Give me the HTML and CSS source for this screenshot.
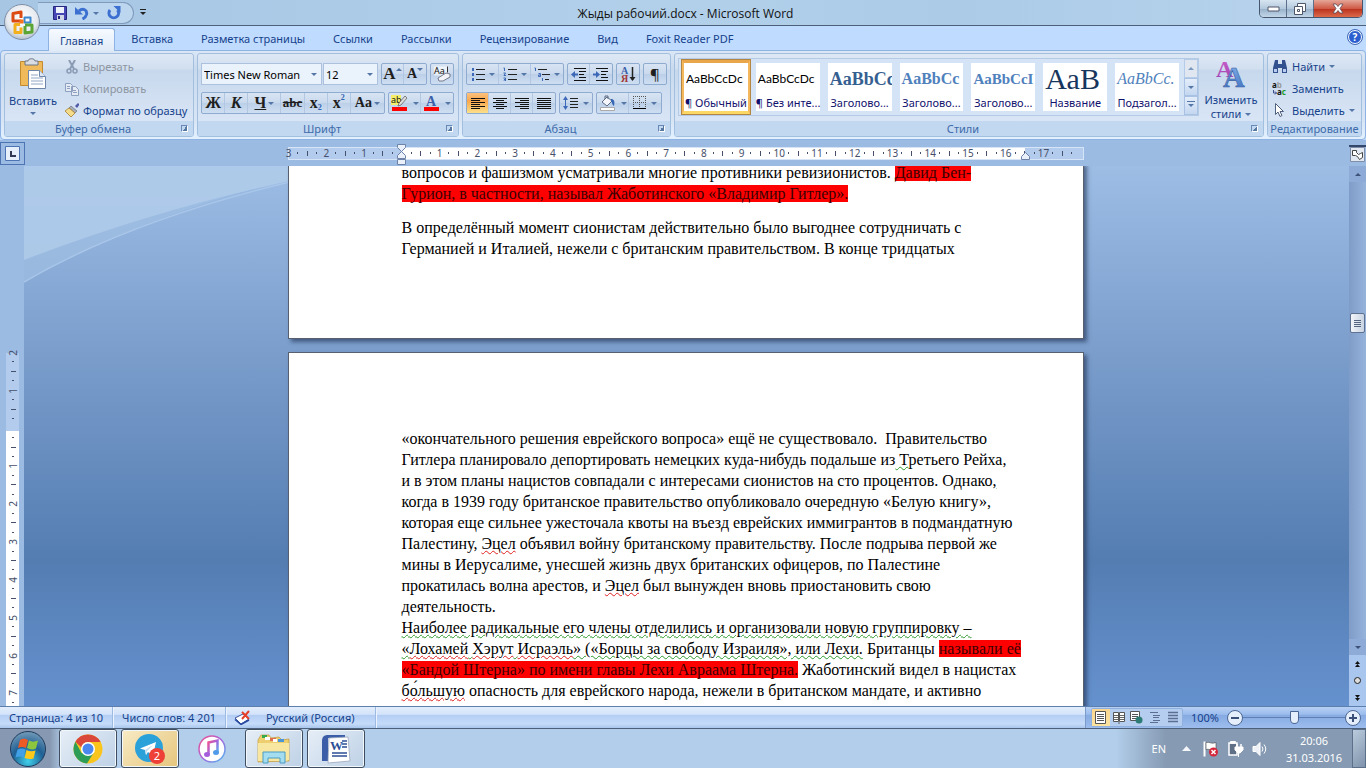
FILE: index.html
```html
<!DOCTYPE html>
<html lang="ru">
<head>
  <meta charset="UTF-8">
  <meta name="viewport" content="width=device-width, initial-scale=1.0">
  <title>Жыды рабочий.docx - Microsoft Word</title>
  <link rel="stylesheet" href="styles.css">
</head>
<body>
  <!-- Title bar -->
  <header class="title-bar">
    <button class="office-button" aria-label="Office">
      <svg width="38" height="38" viewBox="0 0 38 38">
        <defs>
          <radialGradient id="orb" cx="50%" cy="40%" r="60%"><stop offset="0" stop-color="#fff"/><stop offset=".7" stop-color="#e6eaf0"/><stop offset="1" stop-color="#b4bfcd"/></radialGradient>
        </defs>
        <circle cx="19" cy="19" r="17.5" fill="url(#orb)" stroke="#7d8ea6"/>
        <g fill="none" stroke-width="3" stroke-linejoin="round">
          <path d="M18 18h-8v-7.500l8-1.500v6" stroke="#dc4a12"/>
          <path d="M21.500 14.500h6v5h-6z" stroke="#3a86cf" stroke-width="2"/>
          <path d="M17 21.500h-5v8h6v-5" stroke="#f2b01c"/>
          <path d="M22 22h7v7l-7 1v-7" stroke="#5ba534"/>
        </g>
        <path d="M16.500 16.500h4v4h-4z" fill="#f7741d"/>
      </svg>
    </button>
    <div class="quick-access">
      <button class="qa-button" aria-label="Сохранить">
        <svg width="14" height="14" viewBox="0 0 14 14"><path d="M.5.5h13v13h-13z" fill="#4646b4" stroke="#26267e"/><path d="M3 1h8v6H3z" fill="#eef2fb"/><path d="M4 9h7v5H4z" fill="#cfd6e6"/><path d="M5 10h2v3H5z" fill="#26267e"/></svg>
      </button>
      <button class="qa-button" aria-label="Отменить">
        <svg width="14" height="14" viewBox="0 0 14 14"><path d="M4 5C8 1.500 12.500 4 11.500 8.500 11 10.500 9.500 12 7.500 13" fill="none" stroke="#3b6fd0" stroke-width="3"/><path d="M0 1v7.500h8z" fill="#3b6fd0"/></svg>
      </button>
      <span class="arrow"></span>
      <button class="qa-button" aria-label="Повторить">
        <svg width="14" height="14" viewBox="0 0 14 14"><path d="M3 4A4.800 4.800 0 1 0 10.500 4" fill="none" stroke="#3b6fd0" stroke-width="3"/><path d="M6.500 0h7v7z" fill="#3b6fd0"/></svg>
      </button>
    </div>
    <button class="qa-more" aria-label="Настройка"><span class="arrow"></span></button>
    <h1 class="window-title">Жыды рабочий.docx - Microsoft Word</h1>
    <div class="window-buttons">
      <button class="win-button" aria-label="Свернуть"><svg width="13" height="6"><path d="M1 1h11v4H1z" fill="#fff" stroke="#50566a"/></svg></button>
      <button class="win-button" aria-label="Развернуть"><svg width="12" height="12" viewBox="0 0 12 12"><path d="M3.500.5h8v8h-8z" fill="#fff" stroke="#50566a"/><path d="M.5 3.500h8v8h-8z" fill="#fff" stroke="#50566a"/><path d="M3.500 6.500h2v2h-2z" fill="#fff" stroke="#50566a"/></svg></button>
      <button class="win-button win-close" aria-label="Закрыть"><svg width="12" height="11" viewBox="0 0 12 11"><path d="M1 1h3l2 2.500L8 1h3L8 5.500 11 10H8L6 7.500 4 10H1l3-4.500z" fill="#fff" stroke="#5b4a55" stroke-width=".8"/></svg></button>
    </div>
  </header>

  <!-- Tabs -->
  <nav class="tabs">
    <button class="tab active">Главная</button>
    <button class="tab">Вставка</button>
    <button class="tab">Разметка страницы</button>
    <button class="tab">Ссылки</button>
    <button class="tab">Рассылки</button>
    <button class="tab">Рецензирование</button>
    <button class="tab">Вид</button>
    <button class="tab">Foxit Reader PDF</button>
    <button class="help" aria-label="Справка">?</button>
  </nav>

  <!-- Ribbon -->
  <section class="ribbon">
    <div class="group group-clipboard">
      <div class="group-body">
        <button class="big-button paste">
          <svg width="28" height="32" viewBox="0 0 28 32">
            <path d="M1.500 3.500h22v24h-22z" fill="#f0b95a" stroke="#c48a2e"/>
            <path d="M6 3h3c0-3 7-3 7 0h3v4H6z" fill="#d9dde3" stroke="#6d7684"/>
            <path d="M9.500 12.500h11l6 6v12h-17z" fill="#fff" stroke="#6f86ab"/>
            <path d="M20.500 12.500v6h6" fill="#dfe7f3" stroke="#6f86ab"/>
            <path d="M12 17h7M12 20h12M12 23h12M12 26h12" stroke="#8fa5c7"/>
          </svg>
          <span>Вставить</span>
          <span class="arrow"></span>
        </button>
        <div class="button-list">
          <button class="text-button disabled"><svg width="14" height="14" viewBox="0 0 14 14"><path d="M4 0l5 9M10 0L5 9" stroke="#8a9bb5" stroke-width="2"/><circle cx="4" cy="11" r="2" fill="none" stroke="#8a9bb5" stroke-width="1.500"/><circle cx="10" cy="11" r="2" fill="none" stroke="#8a9bb5" stroke-width="1.500"/></svg>Вырезать</button>
          <button class="text-button disabled"><svg width="14" height="14" viewBox="0 0 14 14"><path d="M.5 1.500h5l2 2v6h-7zM6.500 4.500h4l3 3v6h-7z" fill="#e4ebf5" stroke="#8da0bf"/><path d="M2 4.500h3M2 6.500h3M8 8.500h3M8 10.500h4" stroke="#8da0bf"/></svg>Копировать</button>
          <button class="text-button"><svg width="14" height="14" viewBox="0 0 14 14"><path d="M10 3l3-3 1.500 1.500L12 5z" fill="#4e5aa8"/><path d="M6 3l6 5-2 2-6-5z" fill="#a8adb8" stroke="#60656f" stroke-width=".6"/><path d="M4 5l6 5-4 4-6-6z" fill="#f4dc8a" stroke="#a8812c" stroke-width=".8"/></svg>Формат по образцу</button>
        </div>
      </div>
      <div class="group-label"><span>Буфер обмена</span><i class="launcher"></i></div>
    </div>

    <div class="group group-font">
      <div class="group-body rows">
        <div class="row">
          <div class="combos">
            <label class="combo combo-font"><select aria-label="Шрифт"><option>Times New Roman</option></select><span class="arrow"></span></label>
            <label class="combo combo-size"><select aria-label="Размер"><option>12</option></select><span class="arrow"></span></label>
          </div>
          <div class="tool-set">
            <button class="tool serif big-a">A<span class="arrow up"></span></button>
            <button class="tool serif small-a">A<span class="arrow"></span></button>
          </div>
          <div class="tool-set">
            <button class="tool" aria-label="Очистить формат"><svg width="18" height="16" viewBox="0 0 18 16"><path d="M1 .5h14v9H1z" fill="#fff" opacity=".6"/><text x="1" y="8" class="icon-text">Aa</text><path d="M14.500.5v6" stroke="#333"/><path d="M5 12l8-5 4 1v3l-7 4H6z" fill="#f4f4f8" stroke="#737a8c"/></svg></button>
          </div>
        </div>
        <div class="row">
          <div class="tool-set fill">
            <button class="tool serif">Ж</button>
            <button class="tool serif italic">К</button>
            <button class="tool wide serif"><u>Ч</u><span class="arrow"></span></button>
            <button class="tool serif strike">abc</button>
            <button class="tool serif">x<sub>2</sub></button>
            <button class="tool serif">x<sup>2</sup></button>
            <button class="tool wide serif case">Aa<span class="arrow"></span></button>
          </div>
          <div class="tool-set">
            <button class="tool wide" aria-label="Цвет выделения"><svg width="18" height="16" viewBox="0 0 18 16"><path d="M0 0h10v10H0z" fill="#f5ee6a"/><text x="0" y="8" class="icon-text">ab</text><path d="M14 1l2 2-6 7-3 1 1-3z" fill="#ddd" stroke="#555" stroke-width=".7"/><path d="M1 12h15v4H1z" fill="#f00"/></svg><span class="arrow"></span></button>
            <button class="tool wide" aria-label="Цвет текста"><svg width="18" height="16" viewBox="0 0 18 16"><text x="3" y="11" class="icon-letter">A</text><path d="M1 12h15v4H1z" fill="#f00"/></svg><span class="arrow"></span></button>
          </div>
        </div>
      </div>
      <div class="group-label"><span>Шрифт</span><i class="launcher"></i></div>
    </div>

    <div class="group group-paragraph">
      <div class="group-body rows">
        <div class="row">
          <div class="tool-set fill">
            <button class="tool wide" aria-label="Маркеры"><svg width="14" height="14" viewBox="0 0 14 14"><path d="M5 2.500h9M5 7.500h9M5 12.500h9" stroke="#222"/><path d="M1 1h2v3H1zM1 6h2v3H1zM1 11h2v3H1z" fill="#3d68b8"/></svg><span class="arrow"></span></button>
            <button class="tool wide" aria-label="Нумерация"><svg width="14" height="14" viewBox="0 0 14 14"><path d="M5 2.500h9M5 7.500h9M5 12.500h9" stroke="#222"/><path d="M.5 1h1v3M.5 6h2L1 8.500h2M.5 11h2v1.500H1h1.500V14H.5" fill="none" stroke="#3d68b8"/></svg><span class="arrow"></span></button>
            <button class="tool wide" aria-label="Список"><svg width="16" height="14" viewBox="0 0 16 14"><path d="M4 2.500h9M8 7.500h8M11 12.500h4" stroke="#222"/><path d="M.5 1h1v3M4.500 6.500h2v3h-2V8h2M8.500 11v3" fill="none" stroke="#3d68b8"/></svg><span class="arrow"></span></button>
          </div>
          <div class="tool-set">
            <button class="tool" aria-label="Уменьшить отступ"><svg width="16" height="13" viewBox="0 0 16 13"><path d="M3 .5h12M8 3.500h7M8 6.500h5M8 9.500h7M3 12.500h12" stroke="#111"/><path d="M4 3v7L0 6.500z" fill="#3d68b8"/><path d="M3 6.500h4" stroke="#3d68b8" stroke-width="2"/></svg></button>
            <button class="tool" aria-label="Увеличить отступ"><svg width="16" height="13" viewBox="0 0 16 13"><path d="M3 .5h12M8 3.500h7M8 6.500h5M8 9.500h7M3 12.500h12" stroke="#111"/><path d="M3 3v7l4-3.500z" fill="#3d68b8"/><path d="M0 6.500h4" stroke="#3d68b8" stroke-width="2"/></svg></button>
          </div>
          <div class="tool-set">
            <button class="tool" aria-label="Сортировка"><svg width="16" height="17" viewBox="0 0 16 17"><text x="1" y="8" class="sort-a">А</text><text x="1" y="16" class="sort-ya">Я</text><path d="M12.500 1v13" stroke="#222" stroke-width="1.500"/><path d="M9.500 11h6l-3 4z" fill="#222"/></svg></button>
          </div>
          <div class="tool-set">
            <button class="tool pilcrow">¶</button>
          </div>
        </div>
        <div class="row">
          <div class="tool-set">
            <button class="tool pressed" aria-label="По левому краю"><svg width="14" height="11"><path d="M0 .5h14M0 2.500h9M0 4.500h14M0 6.500h9M0 8.500h14M0 10.500h9" stroke="#111"/></svg></button>
            <button class="tool" aria-label="По центру"><svg width="14" height="11"><path d="M0 .5h14M3 2.500h8M0 4.500h14M3 6.500h8M0 8.500h14M3 10.500h8" stroke="#111"/></svg></button>
            <button class="tool" aria-label="По правому краю"><svg width="14" height="11"><path d="M0 .5h14M5 2.500h9M0 4.500h14M5 6.500h9M0 8.500h14M5 10.500h9" stroke="#111"/></svg></button>
            <button class="tool" aria-label="По ширине"><svg width="14" height="11"><path d="M0 .5h14M0 2.500h14M0 4.500h14M0 6.500h14M0 8.500h14M0 10.500h14" stroke="#111"/></svg></button>
          </div>
          <div class="tool-set">
            <button class="tool wide" aria-label="Интервал"><svg width="16" height="16" viewBox="0 0 16 16"><path d="M7 3.500h8M7 6.500h8M7 9.500h8M7 12.500h8" stroke="#222"/><path d="M0 5l2.500-4L5 5zM0 11l2.500 4L5 11z" fill="#3d68b8"/><path d="M2.500 4v8" stroke="#3d68b8"/></svg><span class="arrow"></span></button>
          </div>
          <div class="tool-set">
            <button class="tool wide" aria-label="Заливка"><svg width="18" height="16" viewBox="0 0 18 16"><path d="M3 7l5-5 5 4-5 5z" fill="#f4f6fb" stroke="#5d6b85"/><path d="M6 4V1h3v3" fill="none" stroke="#5d6b85"/><path d="M12 4c3 0 4 2 3 7-2-1-2-4-3-5z" fill="#3565b5"/><path d="M1.500 12.500h14v3h-14z" fill="#fff" stroke="#aaa"/></svg><span class="arrow"></span></button>
            <button class="tool wide" aria-label="Границы"><svg width="14" height="14"><path d="M.5 0v13M6.500 0v13M12.500 0v13M0 .5h13M0 6.500h13" stroke="#555" stroke-dasharray="1 1"/><path d="M0 12.500h13" stroke="#000"/></svg><span class="arrow"></span></button>
          </div>
        </div>
      </div>
      <div class="group-label"><span>Абзац</span><i class="launcher"></i></div>
    </div>

    <div class="group group-styles">
      <div class="group-body">
        <div class="gallery">
          <button class="style-item selected"><span class="sample normal">AaBbCcDс</span><span class="name">¶ Обычный</span></button>
          <button class="style-item"><span class="sample normal">AaBbCcDс</span><span class="name">¶ Без инте...</span></button>
          <button class="style-item"><span class="sample heading-one">AaBbCс</span><span class="name">Заголово...</span></button>
          <button class="style-item"><span class="sample heading-two">AaBbCc</span><span class="name">Заголово...</span></button>
          <button class="style-item"><span class="sample heading-three">AaBbCcI</span><span class="name">Заголово...</span></button>
          <button class="style-item"><span class="sample title">АаВ</span><span class="name">Название</span></button>
          <button class="style-item"><span class="sample subtitle">AaBbCc.</span><span class="name">Подзагол...</span></button>
          <div class="gallery-scroll">
            <button class="off" aria-label="Вверх"><span class="arrow up"></span></button>
            <button aria-label="Вниз"><span class="arrow"></span></button>
            <button aria-label="Все стили"><span class="arrow barred"></span></button>
          </div>
        </div>
        <button class="big-button change-styles">
          <svg width="30" height="30" viewBox="0 0 30 30">
            <defs>
              <linearGradient id="violet" x2="0" y2="1"><stop offset="0" stop-color="#d063cf"/><stop offset="1" stop-color="#9a3fae"/></linearGradient>
              <linearGradient id="azure" x2="0" y2="1"><stop offset="0" stop-color="#8db6ec"/><stop offset="1" stop-color="#3a6fc0"/></linearGradient>
            </defs>
            <text x="0" y="18" class="art-a" fill="url(#violet)">A</text>
            <text x="7" y="28" class="art-a large" fill="url(#azure)" stroke="#3b62a4" stroke-width=".6">A</text>
          </svg>
          <span>Изменить</span>
          <span class="with-arrow">стили<span class="arrow"></span></span>
        </button>
      </div>
      <div class="group-label"><span>Стили</span><i class="launcher"></i></div>
    </div>

    <div class="group group-editing">
      <div class="group-body">
        <div class="button-list">
          <button class="text-button"><svg width="16" height="14" viewBox="0 0 16 14"><path d="M3 0h3v4h4V0h3l2 8v5h-5V8H6v5H1V8z" fill="#33518e"/><path d="M2 9h3v3H2zM11 9h3v3h-3z" fill="#b9cdf0"/></svg>Найти<span class="arrow"></span></button>
          <button class="text-button"><svg width="16" height="14" viewBox="0 0 16 14"><text x="0" y="6" class="icon-text bold">a<tspan fill="#999">b</tspan></text><path d="M1.500 8v3h3M3 9.500L4.500 11 3 12.500" fill="none" stroke="#3c4d8c"/><text x="5" y="13" class="icon-text bold">a<tspan fill="#1a9a2a">c</tspan></text></svg>Заменить</button>
          <button class="text-button"><svg width="16" height="14" viewBox="0 0 16 14"><path d="M3.500.5v11l2.500-2.500 2 4.500 2-1-2-4h3.500z" fill="#fff" stroke="#50607f"/></svg>Выделить<span class="arrow"></span></button>
        </div>
      </div>
      <div class="group-label"><span>Редактирование</span></div>
    </div>
  </section>

  <!-- Horizontal ruler -->
  <div class="ruler-row">
    <button class="tab-stop" aria-label="Табуляция"><svg width="15" height="15"><path d="M.5.500h14v14H.5z" fill="#e6effa" stroke="#4f74b4"/><path d="M6 5v5h5" fill="none" stroke="#333a55" stroke-width="2"/></svg></button>
    <div class="ruler-area">
      <div class="ruler">
        <div class="ruler-scale" id="ruler-h"></div>
        <svg class="marker marker-left" width="9" height="21" viewBox="0 0 9 21"><path d="M.5.5h8v3l-4 4-4-4zM.5 14.500v-3l4-4 4 4v3z" fill="#eaf1fb" stroke="#6d82a8"/><path d="M.5 15.500h8v5h-8z" fill="#eaf1fb" stroke="#6d82a8"/></svg>
        <svg class="marker marker-right" width="9" height="8" viewBox="0 0 9 8"><path d="M.5 7.500v-3l4-4 4 4v3z" fill="#eaf1fb" stroke="#6d82a8"/></svg>
      </div>
    </div>
    <button class="ruler-toggle" aria-label="Линейка"><svg width="15" height="15"><path d="M.5 .5h14v14H.5z" fill="#e2e8f1" stroke="#7f8ea8"/><path d="M2.500 3.500h4v2l2 2 2-1 2-1v5l-3 2-2-3-2-1-3 0z" fill="#fff" stroke="#444"/></svg></button>
  </div>

  <!-- Document area -->
  <main class="workspace">
    <div class="side-ruler"><div class="side-scale" id="ruler-v"></div></div>
    <div class="canvas">
      <svg class="swoosh" width="700" height="120" viewBox="0 0 700 120">
        <path d="M0 0H310V4Q140 38 0 116z" fill="#a3c1e5" opacity=".6"/>
        <path d="M0 116Q120 46 310 6" fill="none" stroke="#a9c6e9" stroke-width="1.500"/>
        <path d="M0 0H310V6Q150 36 0 94z" fill="#b3cdeb" opacity=".75"/>
      </svg>
      <article class="page page-first">
        <p>вопросов и фашизмом усматривали многие противники ревизионистов. <mark>Давид Бен-</mark><br>
        <mark>Гурион, в частности, называл Жаботинского «Владимир Гитлер».</mark></p>
        <p>В определённый момент сионистам действительно было выгоднее сотрудничать с<br>
        Германией и Италией, нежели с британским правительством. В конце тридцатых</p>
      </article>
      <article class="page page-second">
        <p>«окончательного решения еврейского вопроса» ещё не существовало.&nbsp; Правительство<br>
        Гитлера планировало депортировать немецких куда-нибудь подальше из<span class="grammar"> Т</span>ретьего Рейха,<br>
        и в этом планы нацистов совпадали с интересами сионистов на сто процентов. Однако<span class="grammar">,</span><br>
        когда в 1939 году британское правительство опубликовало очередную «Белую книгу»,<br>
        которая еще сильнее ужесточала квоты на въезд еврейских иммигрантов в подмандатную<br>
        Палестину, <span class="spelling">Эцел</span> объявил войну британскому правительству. После подрыва первой же<br>
        мины в Иерусалиме, унесшей жизнь двух британских офицеров, по Палестине<br>
        прокатилась волна арестов, и <span class="spelling">Эцел</span> был вынужден вновь приостановить свою<br>
        деятельность.<br>
        <span class="grammar">Наиболее радикальные его члены отделились и организовали новую группировку –</span><br>
        <span class="grammar">«</span><span class="spelling">Лохамей</span><span class="grammar"> </span><span class="spelling">Хэрут</span><span class="grammar"> </span><span class="spelling">Исраэль</span><span class="grammar">» («Борцы за свободу Израиля», или Лехи.</span> Британцы <mark>называли её</mark><br>
        <mark>«Бандой Штерна» по имени главы Лехи Авраама Штерна.</mark> Жаботинский видел в нацистах<br>
        <span class="spelling">бо́льшую</span> опасность для еврейского народа, нежели в британском мандате, и активно</p>
      </article>
    </div>
    <div class="scrollbar">
      <button class="scroll-button" aria-label="Вверх"><span class="arrow up"></span></button>
      <div class="track"><div class="thumb"><i></i><i></i><i></i><i></i></div></div>
      <button class="scroll-button" aria-label="Вниз"><span class="arrow"></span></button>
      <button class="browse" aria-label="Предыдущая"><svg width="5" height="6"><path d="M0 3l2.500-3L5 3zM0 6l2.500-3L5 6z" fill="#111"/></svg></button>
      <button class="browse" aria-label="Выбор объекта"><svg width="7" height="7"><circle cx="3.500" cy="3.500" r="3" fill="#ddd" stroke="#222"/></svg></button>
      <button class="browse" aria-label="Следующая"><svg width="5" height="6"><path d="M0 0h5L2.500 3zM0 3h5L2.500 6z" fill="#111"/></svg></button>
    </div>
  </main>

  <!-- Status bar -->
  <footer class="status-bar">
    <span class="status-item">Страница: 4 из 10</span>
    <span class="status-item">Число слов: 4 201</span>
    <span class="status-item language"><svg width="17" height="15" viewBox="0 0 17 15"><path d="M1 8l6 6 8-5-6-5z" fill="#fff" stroke="#3a56a0"/><path d="M1 9.500l6 5 8-4.500" fill="none" stroke="#2848a0" stroke-width="1.500"/><path d="M8 2l7 7M15 1L8 9" stroke="#e5402a" stroke-width="2"/></svg>Русский (Россия)</span>
    <div class="status-right">
      <div class="views">
        <button class="view current" aria-label="Разметка"><svg width="12" height="13"><path d="M.5.5h10v12H.5z" fill="#fff" stroke="#555"/><path d="M2 3.500h7M2 5.500h7M2 7.500h7M2 9.500h7" stroke="#555"/></svg></button>
        <button class="view" aria-label="Чтение"><svg width="12" height="13"><path d="M.5 1.500h5v9h-5zM6.500 1.500h5v9h-5z" fill="#fff" stroke="#555"/><path d="M1 4.500h4M1 6.500h4M1 8.500h4M7 4.500h4M7 6.500h4M7 8.500h4M5 12h2" stroke="#666"/></svg></button>
        <button class="view" aria-label="Веб"><svg width="13" height="13"><path d="M.5.5h9v9h-9z" fill="#fff" stroke="#555"/><path d="M2 3.500h6M2 5.500h6M2 7.500h4" stroke="#555"/><circle cx="9" cy="9" r="3.500" fill="#2c7b75"/></svg></button>
        <button class="view" aria-label="Структура"><svg width="12" height="13"><path d="M1 1.500h8M4 4.500h7M4 6.500h6M4 9.500h7M1 11.500h8" stroke="#5c6f92"/></svg></button>
        <button class="view" aria-label="Черновик"><svg width="12" height="13"><path d="M1 1.500h10M1 4.500h10M1 7.500h10M1 10.500h10" stroke="#5c6f92" stroke-width="1.500"/></svg></button>
      </div>
      <span class="zoom-value">100%</span>
      <button class="zoom-button" aria-label="Уменьшить"><svg width="8" height="8"><path d="M0 4h8" stroke="#3c4f78" stroke-width="2"/></svg></button>
      <input class="zoom-slider" type="range" min="0" max="100" value="50" aria-label="Масштаб">
      <button class="zoom-button" aria-label="Увеличить"><svg width="8" height="8"><path d="M0 4h8M4 0v8" stroke="#3c4f78" stroke-width="2"/></svg></button>
    </div>
  </footer>

  <!-- Taskbar -->
  <div class="taskbar">
    <button class="start" aria-label="Пуск">
      <svg width="38" height="38" viewBox="0 0 38 38">
        <defs><radialGradient id="start" cx="50%" cy="85%" r="90%"><stop offset="0" stop-color="#3fd0ea"/><stop offset=".5" stop-color="#1f5f94"/><stop offset="1" stop-color="#7fa3bd"/></radialGradient></defs>
        <circle cx="19" cy="19" r="17.500" fill="url(#start)" stroke="#1f3a5c"/>
        <path d="M11 10c3-2 5-1.500 8 0l-2 8c-3-1.500-5-1.500-8 0z" fill="#ee5a24"/>
        <path d="M20 10.500c3 1.500 5 1.500 9 0l-2 8c-3 1.500-6 1-9-.5z" fill="#8cc63e"/>
        <path d="M8.500 19.500c3-1.500 5-1.500 8 0l-2 8c-3-1.500-5-1.500-8 0z" fill="#41a0e8"/>
        <path d="M17.500 20c3 1.500 6 1.500 9 .5l-2 8c-3 1-6 .5-9-.5z" fill="#fcc81a"/>
      </svg>
    </button>
    <button class="task" aria-label="Chrome">
      <svg width="30" height="30" viewBox="0 0 30 30">
        <circle cx="15" cy="15" r="14.500" fill="#f9c51c"/>
        <path d="M2.400 7.800A14.500 14.500 0 0 1 27.600 8H15a7 7 0 0 0-6.500 5.500z" fill="#d9483b"/>
        <path d="M2.400 7.800A14.500 14.500 0 0 0 14 29.500l6.500-10.500-12 0z" fill="#2e9d57"/>
        <circle cx="15" cy="15" r="7" fill="#fff"/><circle cx="15" cy="15" r="5.500" fill="#4a87ee"/>
      </svg>
    </button>
    <button class="task alert" aria-label="Telegram">
      <svg width="30" height="30" viewBox="0 0 30 30">
        <circle cx="14" cy="14" r="14" fill="#2ba1da"/>
        <path d="M5 14.500L21 8l-3 14-5-4-2 3-1-5z" fill="#fff"/><path d="M10 16l8-5-6 6-1 4z" fill="#c2dcee"/>
        <circle cx="22" cy="22" r="8" fill="#ee4036"/><text x="22" y="26" class="badge-text">2</text>
      </svg>
    </button>
    <button class="task plain" aria-label="iTunes">
      <svg width="30" height="30" viewBox="0 0 30 30">
        <defs><linearGradient id="tune" x2="1" y2="1"><stop offset="0" stop-color="#f2508c"/><stop offset=".5" stop-color="#a765dd"/><stop offset="1" stop-color="#4db8f0"/></linearGradient></defs>
        <circle cx="15" cy="15" r="13" fill="#fff" stroke="url(#tune)" stroke-width="1.500"/>
        <path d="M11.500 20V8.500l9-2V18" fill="none" stroke="url(#tune)" stroke-width="2.500"/>
        <ellipse cx="10" cy="20.500" rx="3" ry="2.500" fill="#a55ddb"/><ellipse cx="19" cy="18.500" rx="3" ry="2.500" fill="#4f9bea"/>
      </svg>
    </button>
    <button class="task" aria-label="Проводник">
      <svg width="34" height="30" viewBox="0 0 34 30">
        <path d="M1 6l3-5h8l2 3 8-1 3 3 7-1v22l-31 1z" fill="#edcf6f" stroke="#c0983a" stroke-width=".7"/>
        <path d="M5 1h5v3H5z" fill="#38a84c"/><path d="M13 4h6v3h-6z" fill="#e06f4a"/><path d="M21 5h6v3h-6z" fill="#4b96d9"/>
        <path d="M8 3h5v3H8zM16 5h4v3h-4z" fill="#fff"/>
        <path d="M1 9h31v17l-3 1H1z" fill="#f8e7a0"/>
        <path d="M6 29V18h22v11h-5v-5h-12v5z" fill="#a4dcf0" stroke="#4a9cc4"/>
      </svg>
    </button>
    <button class="task" aria-label="Word">
      <svg width="32" height="30" viewBox="0 0 32 30">
        <path d="M2 27V7c0-4 2-6 6-6h17v3H8v23z" fill="#3c5ea8"/>
        <path d="M9 4l19-1 2 24-22 2z" fill="#fff" stroke="#9aa7bd" stroke-width=".8"/>
        <text x="10" y="16" class="word-w">W</text>
        <path d="M22 7h5M22 10h5M22 13h5M12 19h15M12 22h15" stroke="#2d4f96" stroke-width="1.500"/>
      </svg>
    </button>
    <div class="tray">
      <span class="tray-lang">EN</span>
      <button class="tray-icon" aria-label="Скрытые значки"><svg width="9" height="5"><path d="M0 5l4.500-5L9 5z" fill="#f4f6fa"/></svg></button>
      <svg width="18" height="16" viewBox="0 0 18 16"><path d="M2.500.5v15" stroke="#fff" stroke-width="2"/><path d="M4 1.500c4-1 5 2 10 0v7c-4 2-6-1-10 0z" fill="#fff" stroke="#444" stroke-width=".6"/><circle cx="11.500" cy="11" r="4.500" fill="#d6263a"/><path d="M9.500 9l4 4M13.500 9l-4 4" stroke="#fff" stroke-width="1.500"/></svg>
      <svg width="16" height="16" viewBox="0 0 16 16"><path d="M1 2h8v12H1z" fill="#5f6f86" stroke="#fff" stroke-width="1.500"/><path d="M3 0h4v2H3zM9 3v3M13 3v3" stroke="#fff" fill="#fff" stroke-width="1.500"/><path d="M7 6h8v3l-3 3h-2L7 9zM10.500 12v4" fill="#fff" stroke="#fff"/></svg>
      <svg width="16" height="16" viewBox="0 0 16 16"><path d="M1 5.500h3l4-4v13l-4-4H1z" fill="#eef2f7" stroke="#fff"/><path d="M10 5.500q2 2.500 0 5M12 3.500q3.500 4.500 0 9" fill="none" stroke="#fff"/></svg>
      <div class="clock"><span>20:06</span><span>31.03.2016</span></div>
      <button class="show-desktop" aria-label="Показать рабочий стол"></button>
    </div>
  </div>

  <script>
    // Fill a ruler: a number on each centimetre, a dot on each quarter, a dash on each half
    function fillRuler(id, start, end, last) {
      const scale = document.getElementById(id);
      for (let q = start * 4; q <= end * 4; q++) {
        const tick = document.createElement('span');
        const step = Math.abs(q % 4);
        if (step === 0) {
          tick.textContent = q === 0 || q / 4 > last ? '' : Math.abs(q / 4);
        } else {
          tick.className = step === 2 ? 'half' : 'quarter';
        }
        scale.appendChild(tick);
      }
    }

    fillRuler('ruler-h', -3, 18, 17);
    fillRuler('ruler-v', -2, 9, 7);
  </script>
</body>
</html>
```
FILE: styles.css
```css
* {
  margin: 0;
  padding: 0;
  box-sizing: border-box;
}

body {
  font-family: "Noto Sans", "Open Sans", sans-serif;
  font-size: 11px;
  height: 100vh;
  display: flex;
  flex-direction: column;
  overflow: hidden;
  background: #bfdbff;
  color: #15428b;
}

button {
  font: inherit;
  color: inherit;
  background: none;
  border: none;
  display: flex;
  align-items: center;
  justify-content: center;
  white-space: nowrap;
}

svg {
  flex: none;
}

.arrow {
  display: inline-block;
  flex: none;
  border: 3px solid transparent;
  border-top-color: #5577a8;
  border-bottom: none;
}

.arrow.up {
  border-top: none;
  border-bottom: 3px solid #5577a8;
}

.arrow.barred {
  position: relative;
}

.arrow.barred::before {
  content: "";
  position: absolute;
  left: -4px;
  top: -6px;
  width: 8px;
  height: 1px;
  background: #5577a8;
}

/* Title bar */
.title-bar {
  height: 26px;
  flex: none;
  display: flex;
  align-items: flex-start;
  position: relative;
  background: linear-gradient(90deg, #a6c6e4, #b2d0ea 50%, #abcbe6 70%, #b9d4ee);
  border-bottom: 1px solid #4c607a;
}

.office-button {
  position: absolute;
  left: 3px;
  top: 3px;
  z-index: 3;
}

.quick-access {
  display: flex;
  align-items: center;
  gap: 8px;
  margin: 2px 0 0 38px;
  padding: 0 12px 0 15px;
  height: 22px;
  width: 96px;
  border: 1px solid #7f9abb;
  border-left: none;
  border-radius: 0 11px 11px 0;
  background: #bdd6ef;
}

.quick-access .arrow {
  margin-left: -4px;
}

.qa-more {
  height: 26px;
  width: 18px;
}

.qa-more .arrow {
  position: relative;
  border-top-color: #222;
}

.qa-more .arrow::before {
  content: "";
  position: absolute;
  left: -3px;
  top: -6px;
  width: 6px;
  height: 1px;
  background: #222;
}

.window-title {
  flex: 1;
  padding-right: 40px;
  text-align: center;
  font-family: "Open Sans", sans-serif;
  font-size: 12px;
  font-weight: normal;
  line-height: 27px;
  color: #111;
}

.window-buttons {
  display: flex;
  height: 18px;
  margin-right: 3px;
  border: 1px solid #47566e;
  border-top: none;
  border-radius: 0 0 5px 5px;
  overflow: hidden;
}

.win-button {
  width: 27px;
  background: linear-gradient(#d8e5f1, #b4c9dd 50%, #96b0c9 51%, #c2d6e8);
  border-right: 1px solid #5d6f8a;
}

.win-close {
  width: 48px;
  border-right: none;
  background: linear-gradient(#e5a698, #cf5a45 50%, #b8301c 51%, #dc6a4a);
}

/* Tabs */
.tabs {
  height: 24px;
  flex: none;
  display: flex;
  align-items: flex-end;
  padding: 0 4px 0 48px;
  position: relative;
  z-index: 2;
}

.tab {
  height: 23px;
  padding: 0 14px;
}

.tab.active {
  padding: 0 11px;
  margin-right: 2px;
  margin-bottom: -1px;
  border: 1px solid #8db2e3;
  border-bottom: none;
  border-radius: 3px 3px 0 0;
  background: linear-gradient(#f6faff, #e1ebf7);
}

.help {
  width: 14px;
  height: 14px;
  margin: 0 0 6px auto;
  border-radius: 50%;
  border: 1px solid #fff;
  outline: 1px solid #4068b8;
  background: #2b5fd0;
  color: #fff;
  font-size: 10px;
  font-weight: bold;
}

/* Ribbon */
.ribbon {
  flex: none;
  display: flex;
  gap: 3px;
  height: 90px;
  padding: 2px 3px;
  border: 1px solid #8db2e3;
  border-radius: 4px;
  background: linear-gradient(#dbe7f5, #c9daee 20%, #d8e5f5 80%, #e3f1ff);
}

.group {
  display: flex;
  flex-direction: column;
  border: 1px solid #a3bfe0;
  border-radius: 3px;
  overflow: hidden;
  background: linear-gradient(#dee8f5, #d1dfef 18%, #c7d8ed 20%, #dee9f8);
}

.group-body {
  flex: 1;
  display: flex;
  min-height: 0;
}

.group-label {
  height: 15px;
  flex: none;
  display: flex;
  align-items: center;
  background: #c1d8f0;
  color: #3e6aaa;
}

.group-label span {
  flex: 1;
  text-align: center;
}

.launcher {
  width: 7px;
  height: 7px;
  margin-right: 5px;
  border: 1px solid #6888b5;
  border-right-color: #fff;
  border-bottom-color: #fff;
  background: linear-gradient(135deg, transparent 50%, #56779f 50%);
}

.group-clipboard {
  flex: 0 0 190px;
}

.group-font {
  flex: 0 0 262px;
}

.group-paragraph {
  flex: 0 0 209px;
}

.group-styles {
  flex: 1;
  min-width: 0;
}

.group-editing {
  flex: 0 0 95px;
}

.big-button {
  flex: none;
  flex-direction: column;
  justify-content: flex-start;
  line-height: 14px;
}

.paste {
  width: 56px;
  padding-top: 4px;
}

.paste span:first-of-type {
  margin: 4px 0;
}

.change-styles {
  width: 64px;
  padding-top: 5px;
}

.change-styles svg {
  margin-bottom: 4px;
}

.with-arrow {
  display: flex;
  align-items: center;
  gap: 4px;
}

.button-list {
  display: flex;
  flex-direction: column;
  padding-top: 2px;
  padding-left: 4px;
}

.text-button {
  height: 22px;
  gap: 4px;
  justify-content: flex-start;
}

.text-button.disabled {
  color: #8d95a1;
}

.rows {
  flex-direction: column;
  gap: 7px;
  padding: 9px 4px 0 3px;
}

.row {
  display: flex;
  gap: 3px;
}

.combos {
  display: flex;
  flex: 1;
  gap: 1px;
}

.combo {
  display: flex;
  align-items: center;
  height: 22px;
  background: #eaf2fb;
  border: 1px solid #abc1de;
  padding-right: 4px;
}

.combo-font {
  flex: 1;
}

.combo-size {
  width: 55px;
}

.combo select {
  flex: 1;
  min-width: 0;
  appearance: none;
  border: none;
  background: none;
  padding-left: 2px;
  font: inherit;
  color: #000;
}

.tool-set {
  display: flex;
  height: 22px;
  border: 1px solid #8fabd0;
  border-radius: 2px;
  background: linear-gradient(#d8e4f3, #c9d9ed 50%, #bbcfe8 51%, #cfdff2);
}

.fill {
  flex: 1;
}

.tool {
  width: 22px;
  gap: 2px;
  border-right: 1px solid #b2c7e2;
  color: #1e1e1e;
}

.tool:last-child {
  border-right: none;
}

.tool.wide {
  width: 32px;
}

.fill .tool {
  flex: 1 1 22px;
}

.fill .tool.wide {
  flex: 1 1 32px;
}

.tool.pressed {
  background: linear-gradient(#fbc27e, #f9a84c 40%, #fce08a);
}

.serif {
  font-family: "Liberation Serif", serif;
  font-size: 16px;
  line-height: 18px;
  font-weight: bold;
  gap: 0;
}

.serif sub,
.serif sup {
  font-size: 8px;
  line-height: 10px;
  color: #2f62b0;
}

.serif sub {
  align-self: flex-end;
}

.serif sup {
  align-self: flex-start;
}

.wide .arrow {
  margin-left: 2px;
}

.big-a .arrow,
.small-a .arrow {
  align-self: flex-start;
  margin-top: 4px;
}

.big-a {
  font-size: 17px;
}

.small-a {
  font-size: 14px;
}

.italic {
  font-style: italic;
}

.strike {
  font-size: 13px;
  text-decoration: line-through;
}

.case {
  font-size: 14px;
}

.pilcrow {
  font-size: 15px;
  line-height: 18px;
}

.icon-text {
  font-size: 9px;
  fill: #111;
}

.icon-text.bold {
  font-size: 8px;
  font-weight: bold;
}

.icon-letter {
  font: bold 14px "Liberation Serif", serif;
  fill: #3b5fa8;
}

.sort-a,
.sort-ya {
  font: bold 10px "Liberation Serif", serif;
  fill: #3b5fa8;
}

.sort-ya {
  fill: #a03838;
}

.art-a {
  font: bold 24px "Liberation Serif", serif;
}

.art-a.large {
  font-size: 30px;
}

/* Style gallery */
.gallery {
  flex: 1;
  min-width: 0;
  display: flex;
  align-items: center;
  gap: 2px;
  margin: 4px 0 5px 3px;
  padding-left: 2px;
  border: 1px solid #b5cae4;
  background: #d4e4f6;
}

.style-item {
  flex: 1 1 70px;
  min-width: 0;
  flex-direction: column;
  align-items: stretch;
  height: 56px;
  border: 3px solid transparent;
  border-width: 4px 3px;
  background: #fff padding-box;
}

.style-item.selected {
  border-color: #eaa64b #f4b95f #fbd766;
  outline: 1px solid #b38743;
  outline-offset: -1px;
}

.sample {
  height: 32px;
  line-height: 32px;
  padding: 0 2px;
  overflow: hidden;
  text-align: left;
}

.name {
  height: 16px;
  line-height: 15px;
  color: #11116e;
}

.normal {
  font-family: Lato, sans-serif;
  font-size: 12px;
  color: #000;
}

.heading-one,
.heading-two,
.heading-three,
.title,
.subtitle {
  font-family: "Liberation Serif", serif;
  font-weight: bold;
  color: #4f81bd;
}

.heading-one {
  font-size: 18px;
  color: #365f91;
}

.heading-two {
  font-size: 16px;
}

.heading-three {
  font-size: 15px;
}

.title {
  font-size: 30px;
  font-weight: normal;
  color: #17365d;
}

.subtitle {
  font-size: 16px;
  font-weight: normal;
  font-style: italic;
}

.gallery-scroll {
  display: flex;
  flex-direction: column;
  flex: none;
  align-self: stretch;
  width: 14px;
}

.gallery-scroll button {
  flex: 1;
  border: 1px solid #a9c2e3;
  background: linear-gradient(#e3edfa, #c4d7f0);
}

.gallery-scroll .off {
  background: #e6e9ee;
  opacity: .7;
}

/* Rulers */
.ruler-row {
  height: 26px;
  flex: none;
  display: flex;
  align-items: center;
  background: #9bbbe3;
}

.tab-stop {
  width: 25px;
  height: 23px;
  border: 1px solid #4f74b4;
}

.ruler-area {
  flex: 1;
  display: flex;
  justify-content: center;
  padding-right: 3px;
}

.ruler {
  position: relative;
  width: 796px;
  height: 13px;
  border: 1px solid #d5e4f7;
  background: linear-gradient(90deg, #b3cbec 113px, #fff 113px, #fff 736px, #b3cbec 736px);
}

.ruler-scale {
  height: 11px;
  display: flex;
  justify-content: space-between;
}

.ruler-scale span,
.side-scale span {
  width: 0;
  height: 0;
  display: flex;
  align-items: center;
  justify-content: center;
  font-size: 10px;
  color: #46506a;
}

.ruler-scale span {
  height: 11px;
}

.quarter::before {
  content: "";
  flex: none;
  width: 1px;
  height: 2px;
  background: #46506a;
}

.half::before {
  content: "";
  flex: none;
  width: 1px;
  height: 5px;
  background: #46506a;
}

.marker {
  position: absolute;
}

.marker-left {
  left: 108px;
  top: -4px;
}

.marker-right {
  left: 732px;
  top: 4px;
}

.ruler-toggle {
  width: 17px;
  border-top: 2px solid #33466b;
}

.side-ruler {
  width: 24px;
  flex: none;
  background: #9bbbe3;
  overflow: hidden;
}

.side-scale {
  width: 13px;
  height: 416px;
  margin: 187px 0 0 6px;
  display: flex;
  flex-direction: column;
  justify-content: space-between;
  align-items: center;
  background: linear-gradient(#b3cbec 78px, #fff 78px);
}

.side-scale span {
  transform: rotate(-90deg);
}

/* Workspace */
.workspace {
  flex: 1;
  min-height: 0;
  display: flex;
}

.canvas {
  flex: 1;
  position: relative;
  overflow: hidden;
  display: flex;
  flex-direction: column;
  align-items: center;
  padding-right: 2px;
  background: linear-gradient(#9dbde5, #7b9ecc 34%, #547db2 73%, #6591ce);
}

.swoosh {
  position: absolute;
  left: 0;
  top: 0;
}

.page {
  position: relative;
  flex: none;
  width: 796px;
  padding: 0 50px 79px 113px;
  border: 1px solid #56606f;
  background: #fff;
  box-shadow: 3px 3px 4px rgba(30, 45, 80, .6);
  font: 16px/21px "Liberation Serif", "Times New Roman", serif;
  color: #000;
  white-space: nowrap;
}

.page-first {
  margin-top: -4px;
  border-top: none;
}

.page-second {
  margin-top: 13px;
  padding-top: 75px;
}

.page p + p {
  margin-top: 13px;
}

mark {
  background: #f00;
  color: #3a0000;
}

.spelling {
  text-decoration: underline wavy #e02020 1px;
}

.grammar {
  text-decoration: underline wavy #2e9a2e 1px;
}

/* Scrollbar */
.scrollbar {
  width: 17px;
  flex: none;
  display: flex;
  flex-direction: column;
  background: #a9c6ee;
}

.scroll-button {
  height: 16px;
  background: #8dabd6;
}

.scroll-button .arrow {
  border-top-color: #3c5078;
}

.scroll-button .arrow.up {
  border-bottom-color: #3c5078;
}

.track {
  flex: 1;
  padding-top: 131px;
  background: linear-gradient(90deg, #7f9cc8, #96b3dc);
}

.thumb {
  height: 20px;
  margin: 0 1px;
  display: flex;
  flex-direction: column;
  justify-content: center;
  gap: 1px;
  padding: 0 3px;
  border: 1px solid #5f7291;
  border-radius: 2px;
  background: linear-gradient(90deg, #f2f5f9, #c9d3e2);
}

.thumb i {
  height: 1px;
  background: #55647f;
}

.browse {
  height: 17px;
}

/* Status bar */
.status-bar {
  height: 22px;
  flex: none;
  display: flex;
  align-items: stretch;
  border-top: 1px solid #5c7fae;
  background: linear-gradient(#e3eefc, #d3e3fa 35%, #b3cdf3 40%, #c6dcfa 80%, #a9c6ec);
}

.status-item {
  display: flex;
  align-items: center;
  padding: 0 9px;
  border-right: 1px solid #9dbbe2;
  box-shadow: 1px 0 #eaf3ff;
}

.language {
  gap: 15px;
  padding: 0 20px 0 8px;
}

.status-right {
  display: flex;
  align-items: center;
  margin-left: auto;
  padding: 0 5px;
  border-left: 1px solid #7b9cc9;
  background: linear-gradient(#b7d0f5, #9bbcec 35%, #86abe2 40%, #9dbdee);
}

.views {
  display: flex;
  height: 19px;
  border: 1px solid #8fb0df;
  border-radius: 2px;
  background: #b5cdee;
}

.view {
  width: 18px;
}

.view.current {
  background: linear-gradient(#fbd690, #fbe3a0);
}

.zoom-value {
  margin: 0 8px;
}

.zoom-button {
  width: 16px;
  height: 16px;
  border: 1px solid #4c6694;
  border-radius: 50%;
  background: #e5effc;
}

.zoom-slider {
  width: 102px;
  height: 18px;
  appearance: none;
  background: linear-gradient(#5f7fb2, #5f7fb2) center / 100% 1px no-repeat;
}

.zoom-slider::-webkit-slider-thumb {
  appearance: none;
  width: 9px;
  height: 13px;
  border: 1px solid #4c6694;
  border-radius: 1px 1px 5px 5px;
  background: #e5effc;
}

/* Taskbar */
.taskbar {
  height: 40px;
  flex: none;
  display: flex;
  align-items: stretch;
  gap: 4px;
  border-top: 1px solid #4d6079;
  background: linear-gradient(90deg, #8799b2 50px, #b2ceea 64px, #b2ceea calc(100% - 250px), #869ab3 calc(100% - 200px));
}

.start {
  width: 55px;
}

.task {
  width: 58px;
  border: 1px solid #3f4d60;
  border-radius: 3px;
  background: linear-gradient(135deg, #e6eef7, #bed1e6);
  box-shadow: inset 0 0 0 1px #f2f7fc;
}

.task.alert {
  background: linear-gradient(135deg, #f8ebc5, #e5c57c);
}

.task.plain {
  background: none;
  border-color: transparent;
  box-shadow: none;
}

.badge-text {
  font-size: 11px;
  fill: #fff;
  text-anchor: middle;
}

.word-w {
  font: bold 13px "Liberation Serif", serif;
  fill: #2d4f96;
}

.tray {
  display: flex;
  align-items: center;
  gap: 8px;
  margin-left: auto;
  color: #fff;
}

.tray-lang {
  margin-right: 8px;
}

.tray-icon {
  margin-right: 3px;
}

.clock {
  display: flex;
  flex-direction: column;
  align-items: center;
  width: 60px;
  margin-left: 8px;
  line-height: 17px;
}

.show-desktop {
  align-self: stretch;
  width: 14px;
  border: 1px solid #5d7089;
  background: linear-gradient(135deg, #b9cbdc, #7f93ab);
}
```
